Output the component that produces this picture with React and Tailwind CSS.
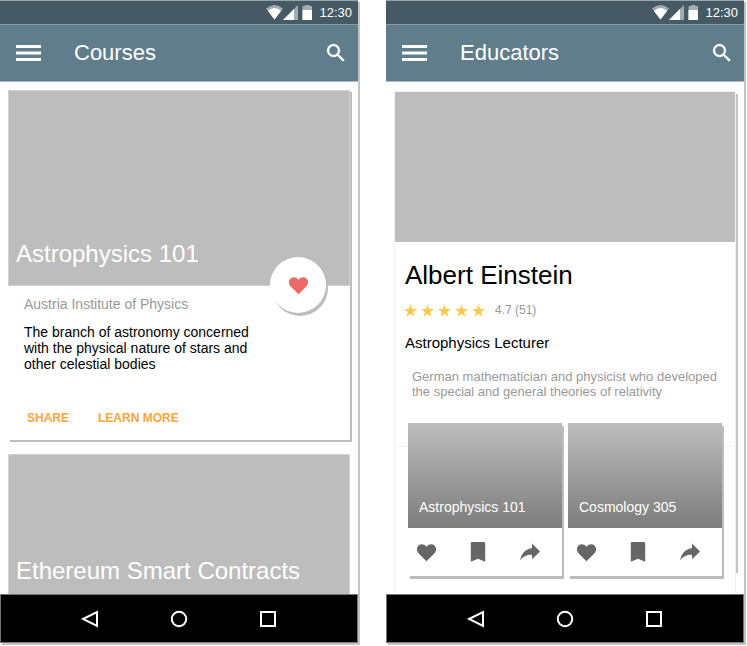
import React from "react";

function StatusBar() {
  return (
    <div className="flex h-6 items-center justify-end border-t border-[#9aa5aa] bg-[#455a64] pr-[6px] text-[13px] leading-4 text-white">
      <svg className="h-[15px] w-[46px]" viewBox="0 0 46 15" aria-hidden="true">
        <path d="M0 3.500 Q8.500 -3.500 17 3.500 L8.500 14.500 Z" fill="#a2acb1" />
        <path d="M2 6 Q8.500 0 15 6 L8.500 14.500 Z" fill="#fff" />
        <path d="M32 0 V15 H17 Z" fill="#a2acb1" />
        <path d="M28 4 V15 H17 Z" fill="#fff" />
        <path d="M36.500 1 H39 V0 H43.500 V1 H46 V15 H36.500 Z" fill="#a2acb1" />
        <path d="M36.500 5 H46 V15 H36.500 Z" fill="#fff" />
      </svg>
      <span className="ml-[7px]">12:30</span>
    </div>
  );
}

function AppBar({ title }) {
  return (
    <header className="flex h-[58px] items-center border-y border-t-[#8796a0] border-b-[#a9bac2] bg-[#607d8b] pl-4 pr-[10px] text-white">
      <button type="button" aria-label="Menu">
        <svg className="h-4 w-[25px]" viewBox="0 0 25 16" fill="#fff" aria-hidden="true">
          <path d="M0 0H25V3H0ZM0 6.500H25V9.500H0ZM0 13H25V16H0Z" />
        </svg>
      </button>
      <h1 className="ml-[33px] text-[22px] leading-7">{title}</h1>
      <button type="button" aria-label="Search" className="ml-auto">
        <svg className="h-6 w-6" viewBox="0 0 24 24" fill="#fff" stroke="#fff" strokeWidth="0.3" aria-hidden="true">
          <path d="M15.500 14h-.79l-.28-.27A6.471 6.471 0 0 0 16 9.500 6.500 6.500 0 1 0 9.500 16c1.610 0 3.090-.59 4.230-1.570l.27.28v.79l5 4.990L20.490 19l-4.990-5zm-6 0C7.010 14 5 11.990 5 9.500S7.010 5 9.500 5 14 7.010 14 9.500 11.990 14 9.500 14z" />
        </svg>
      </button>
    </header>
  );
}

function NavBar() {
  return (
    <nav className="flex h-[49px] items-center justify-center gap-[71px] border border-[#777] bg-black">
      <button type="button" aria-label="Back">
        <svg className="h-[18px] w-[18px]" viewBox="0 0 18 18" fill="none" stroke="#fff" strokeWidth="2" aria-hidden="true">
          <path d="M2 9 L16 2 V16 Z" />
        </svg>
      </button>
      <button type="button" aria-label="Home">
        <svg className="h-[18px] w-[18px]" viewBox="0 0 18 18" fill="none" stroke="#fff" strokeWidth="2" aria-hidden="true">
          <circle cx="9" cy="9" r="7.200" />
        </svg>
      </button>
      <button type="button" aria-label="Recent apps">
        <svg className="h-[18px] w-[18px]" viewBox="0 0 18 18" fill="none" stroke="#fff" strokeWidth="2" aria-hidden="true">
          <path d="M2 2 H16 V16 H2 Z" />
        </svg>
      </button>
    </nav>
  );
}

function Phone({ title, children }) {
  return (
    <section className="flex flex-col bg-white shadow-[2px_2px_0_#c4c4c4]">
      <StatusBar />
      <AppBar title={title} />
      {children}
      <NavBar />
    </section>
  );
}

function Heart() {
  return (
    <svg className="h-[23px] w-[23px]" viewBox="0 0 24 24" fill="currentColor" aria-hidden="true">
      <path d="M12 21.200 L3.600 12.700 C1.400 10.300 1.400 6.900 3.600 4.800 C6 2.600 9.800 3 12 6 C14.200 3 18 2.600 20.400 4.800 C22.600 6.900 22.600 10.300 20.400 12.700 Z" />
    </svg>
  );
}

function Star() {
  return (
    <svg className="h-[13px] w-[13px]" viewBox="2 1.500 20 19" fill="#fcc94b" aria-hidden="true">
      <path d="M12 1.500 L14.400 8.800 L22 8.800 L15.900 13.300 L18.200 20.500 L12 16.100 L5.800 20.500 L8.100 13.300 L2 8.800 L9.600 8.800 Z" />
    </svg>
  );
}

function MiniCourse({ title }) {
  return (
    <article className="bg-white shadow-[2px_3px_0_#bdbdbd]">
      <div className="flex h-[105px] items-end bg-linear-to-b from-[#bdbdbd] to-[#7d7d7d] pb-[11px] pl-[11px]">
        <h3 className="text-sm text-white">{title}</h3>
      </div>
      <div className="flex h-12 items-center gap-7 pl-[6px] text-[#666]">
        <button type="button" aria-label={"Like " + title} className="flex w-6 justify-center">
          <Heart />
        </button>
        <button type="button" aria-label={"Bookmark " + title} className="flex w-6 justify-center">
          <svg className="h-6 w-6" viewBox="0 0 24 24" fill="currentColor" aria-hidden="true">
            <path d="M6 2 H18 Q19.200 2 19.200 3.200 V21.800 L12 18.800 L4.800 21.800 V3.200 Q4.800 2 6 2 Z" />
          </svg>
        </button>
        <button type="button" aria-label={"Share " + title} className="flex w-6 justify-center">
          <svg className="h-6 w-6" viewBox="0 0 24 24" fill="currentColor" aria-hidden="true">
            <path d="M14 8 V3.600 L22 11.400 L14 19.200 V14.800 C8.500 14.800 4.700 16.600 2 20.600 C3.100 14.900 6.300 9.200 14 8 Z" />
          </svg>
        </button>
      </div>
    </article>
  );
}

function Courses() {
  return (
    <main className="flex-1 px-2 pt-2">
      <article className="bg-white shadow-[2px_2px_0_#bdbdbd]">
        <div className="relative flex h-[196px] items-end border border-[#d2d2d2] bg-[#bdbdbd] pb-[17px] pl-[7px]">
          <h2 className="text-2xl leading-7 text-white">Astrophysics 101</h2>
          <button
            type="button"
            aria-label="Favorite Astrophysics 101"
            className="absolute -bottom-7 right-[23px] flex h-14 w-14 items-center justify-center rounded-full bg-white text-[#ec6a66] shadow-[2px_3px_0_#bdbdbd]"
          >
            <Heart />
          </button>
        </div>
        <div className="px-4 pb-[14px] pt-[10px]">
          <p className="text-sm leading-4 text-[#999]">Austria Institute of Physics</p>
          <p className="mt-3 max-w-[240px] text-sm leading-4 text-black">
            The branch of astronomy concerned with the physical nature of stars and other celestial bodies
          </p>
          <div className="mt-[38px] flex gap-[29px] pl-[3px] text-xs font-bold text-[#ffa53a]">
            <button type="button">SHARE</button>
            <button type="button">LEARN MORE</button>
          </div>
        </div>
      </article>
      <article className="mt-[14px] flex h-[140px] items-end border border-b-0 border-[#d2d2d2] bg-[#bdbdbd] pb-[9px] pl-[7px]">
        <h2 className="text-2xl leading-7 text-white">Ethereum Smart Contracts</h2>
      </article>
    </main>
  );
}

function Educators() {
  return (
    <main className="flex-1 px-2 pt-[9px]">
      <div className="relative">
        <div className="absolute -right-[2px] bottom-[21px] top-[3px] w-[2px] bg-[#c4c4c4]" />
        <article className="border border-[#f2f2f2] bg-white pb-[47px]">
          <div className="h-[150px] bg-[#bdbdbd]" />
          <h2 className="mt-[17px] pl-[10px] text-[26px] leading-8 text-black">Albert Einstein</h2>
          <div className="mt-[11px] flex items-center gap-1 pl-[9px]">
            <Star />
            <Star />
            <Star />
            <Star />
            <Star />
            <span className="ml-[6px] text-xs text-[#999]">4.7 (51)</span>
          </div>
          <p className="mt-[15px] pl-[10px] text-[15px] leading-5 text-black">Astrophysics Lecturer</p>
          <p className="mt-4 max-w-[330px] pl-[17px] text-[13px] leading-[15px] text-[#999]">
            German mathematician and physicist who developed the special and general theories of relativity
          </p>
        </article>
        <div className="border-x border-[#f2f2f2] px-[13px] pb-[18px]">
          <div className="relative -mt-6 grid grid-cols-2 gap-[6px]">
            <MiniCourse title="Astrophysics 101" />
            <MiniCourse title="Cosmology 305" />
          </div>
        </div>
      </div>
    </main>
  );
}

export default function App() {
  return (
    <div className="grid grid-cols-2 gap-[28px] bg-white pb-[3px] pr-[3px] font-['Liberation_Sans',Arial,sans-serif]">
      <Phone title="Courses">
        <Courses />
      </Phone>
      <Phone title="Educators">
        <Educators />
      </Phone>
    </div>
  );
}
